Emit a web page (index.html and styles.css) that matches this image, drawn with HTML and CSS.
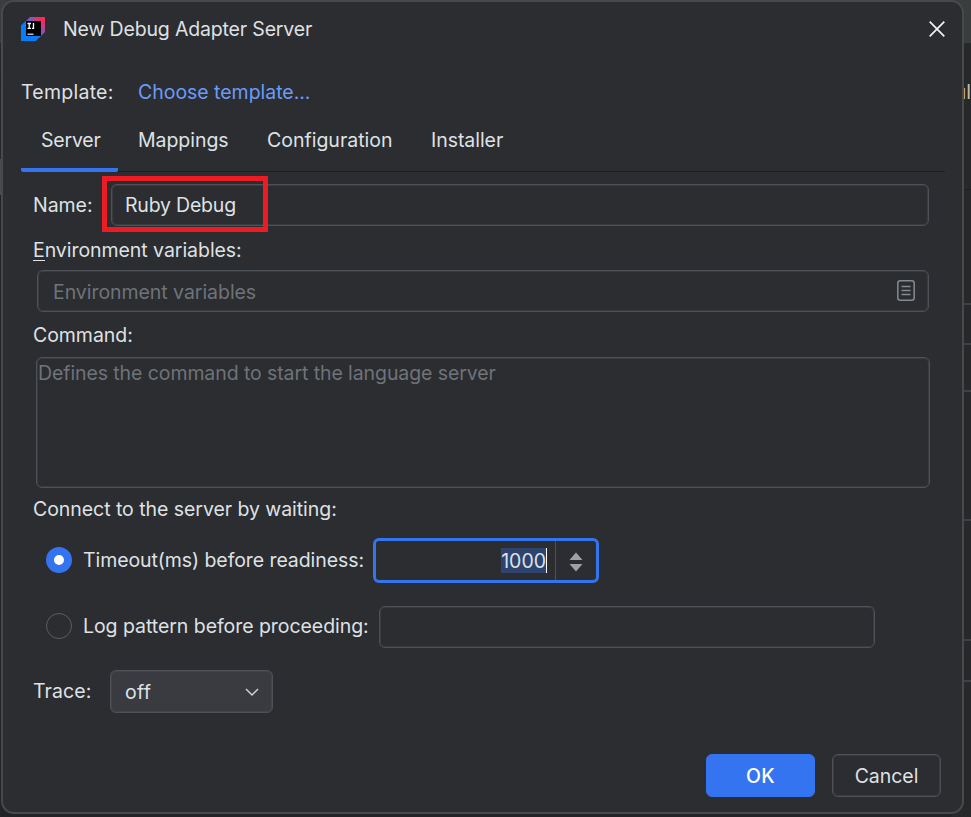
FILE: index.html
```html
<!DOCTYPE html>
<html lang="en">
<head>
<meta charset="utf-8">
<title>New Debug Adapter Server</title>
<link rel="stylesheet" href="styles.css">
</head>
<body>
<div class="backdrop">
  <div class="edge-left"><i class="el-top"></i><i class="el-gap"></i><i class="el-line"></i><i class="el-rest"></i><i class="el-thumb"></i></div>
  <div class="edge-right">
    <div class="er er-top"></div>
    <div class="er er-text"><span>ul</span></div>
    <div class="er er-a"></div>
    <div class="er er-b"></div>
    <div class="er er-c"></div>
    <div class="er er-d"></div>
    <div class="er er-e"></div>
    <div class="er er-f"></div>
    <div class="er er-g"></div>
  </div>
</div>
<main class="dialog">
  <header class="titlebar">
    <svg class="logo" width="24" height="24" viewBox="0 0 24 24">
      <defs>
        <linearGradient id="lg" x1="3" y1="9" x2="23" y2="3" gradientUnits="userSpaceOnUse">
          <stop offset="0" stop-color="#3b6fe8"/><stop offset=".45" stop-color="#8b52b8"/><stop offset=".8" stop-color="#fe2857"/>
        </linearGradient>
        <linearGradient id="lr" x1="22" y1="4" x2="18" y2="20" gradientUnits="userSpaceOnUse">
          <stop offset="0" stop-color="#fe2857"/><stop offset="1" stop-color="#4a6ce0"/>
        </linearGradient>
      </defs>
      <path d="M0 9 9 0h15v4H4v6z" fill="url(#lg)"/>
      <path d="M19 3h5v12l-6 6z" fill="url(#lr)"/>
      <path d="M0 8.500 5 4v15h14.500L15 24H0z" fill="#087cfa"/>
      <path d="M5 4h15v15H5z" fill="#000"/>
      <path d="M6.500 6.500h3.500M6.500 11.300h3.500M8.200 6.500v4.800M11 11.300h1.500V6" fill="none" stroke="#fff" stroke-width="1.300"/>
      <path d="M6.500 17.200h6" stroke="#ddd" stroke-width="1.300"/>
    </svg>
    <span class="title"><span class="t-title">New Debug Adapter Server</span></span>
    <svg class="close" width="16" height="16" viewBox="0 0 16 16"><path d="M.7.700l14.600 14.600M15.300.700.7 15.300" stroke="#f2f2f2" stroke-width="1.700"/></svg>
  </header>
  <div class="template"><span class="t-template">Template:</span><a class="t-choose">Choose template...</a></div>
  <nav class="tabs">
    <div class="tab tab-server active"><span>Server</span></div>
    <div class="tab tab-mappings"><span>Mappings</span></div>
    <div class="tab tab-config"><span>Configuration</span></div>
    <div class="tab tab-installer"><span>Installer</span></div>
  </nav>
  <section class="form">
    <div class="row name-row">
      <label class="t-name">Name:</label>
      <div class="field name-field"><span class="t-ruby">Ruby Debug</span></div>
      <div class="highlight"></div>
    </div>
    <div class="label env-label"><span class="t-env"><span class="mn">E</span>nvironment variables:</span></div>
    <div class="field env-field"><span class="t-envph">Environment variables</span>
      <svg width="18" height="21" viewBox="0 0 18 21" fill="none" stroke="#868a91"><rect x=".8" y=".8" width="16.400" height="19.400" rx="2.500" stroke-width="1.500"/><path d="M4.500 6.500h9M4.500 10.500h9M4.500 14.500h9" stroke-width="1.300"/></svg>
    </div>
    <div class="label cmd-label"><span class="t-cmd">Command:</span></div>
    <div class="field cmd-field"><span class="t-cmdph">Defines the command to start the language server</span></div>
    <div class="label connect-label"><span class="t-connect">Connect to the server by waiting:</span></div>
    <div class="row timeout-row">
      <i class="radio on"></i><label class="t-timeout">Timeout(ms) before readiness:</label>
      <div class="spinner"><span class="value"><span class="sel">1000</span></span>
        <span class="arrows"><svg width="14" height="20" viewBox="0 0 14 20" fill="#9da0a8"><path d="M7 .500 13.500 8H.5zM.5 12h13L7 19.500z"/></svg></span>
      </div>
    </div>
    <div class="row log-row">
      <i class="radio"></i><label class="t-log">Log pattern before proceeding:</label>
      <div class="field log-field"></div>
    </div>
    <div class="row trace-row">
      <label class="t-trace">Trace:</label>
      <div class="field combo"><span class="t-off">off</span>
        <svg width="14" height="9" viewBox="0 0 14 9" fill="none" stroke="#ced0d6" stroke-width="1.500"><path d="M1 1l6 6 6-6"/></svg>
      </div>
    </div>
  </section>
  <footer class="buttons">
    <div class="btn primary"><span class="t-ok">OK</span></div>
    <div class="btn"><span class="t-cancel">Cancel</span></div>
  </footer>
</main>
</body>
</html>
```
FILE: styles.css
```css
* { box-sizing: border-box; }
body {
  margin: 0;
  width: 971px;
  height: 817px;
  overflow: hidden;
  position: relative;
  background: #222326;
  color: #dfe1e5;
  font: 19.5px/24px Inter, sans-serif;
  letter-spacing: -.05px;
  white-space: nowrap;
}
.backdrop { position: absolute; inset: 0; display: flex; justify-content: space-between; }
.edge-left { width: 14px; display: flex; flex-direction: column; }
.edge-left i { display: block; background: #27282b; }
.edge-left .el-top { height: 43px; background: #3a3d3e; }
.edge-left .el-gap { height: 36px; }
.edge-left .el-line { height: 2px; background: #1e1f22; }
.edge-left .el-rest { height: 78px; }
.edge-left .el-thumb { height: 36px; background: #4a4b4e; }
.edge-right { width: 20px; }
.er { background: #27282a; border-bottom: 2px solid #404144; }
.er-top { height: 43px; background: #3a3d3e; border: 0; }
.er-text { height: 147px; border-bottom: 1px solid #1e1f22; padding-top: 37px; text-align: right; color: #c9bfa0; }
.er-a { height: 115px; }
.er-b { height: 40px; }
.er-c { height: 47px; }
.er-d { height: 129px; }
.er-e { height: 120px; }
.er-f { height: 41px; }
.er-g { height: 135px; border: 0; }

.dialog {
  position: relative;
  width: 963px;
  height: 814px;
  margin-left: 1px;
  border: 2px solid #48494c;
  border-radius: 13px;
  background: #2b2d30;
}
.titlebar { display: flex; align-items: center; height: 54px; padding: 0 17px 0 18px; }
.title { flex: 1; margin-left: 18px; letter-spacing: -.16px; }
.close { margin-left: auto; }
.template { display: flex; align-items: center; height: 72px; padding-left: 18px; }
.template a { color: #6b9bfa; letter-spacing: -.03px; }
.t-template { width: 117px; letter-spacing: .25px; }
.tabs { display: flex; height: 44px; margin: 0 17px 0 18px; border-bottom: 1px solid #1e1f22; }
.tab { height: 44px; padding: 0 20px; line-height: 24px; }
.active { background: linear-gradient(#3574f0, #3574f0) bottom / 100% 4px no-repeat; border-radius: 2px; }
.tab-server { width: 97px; letter-spacing: -.2px; }
.tab-mappings { width: 129px; }
.tab-config { width: 164px; letter-spacing: 0; }

.form { display: flex; flex-direction: column; padding-left: 30px; }
.row { display: flex; align-items: center; }
.field { border: 1px solid #4e5157; box-shadow: inset 0 0 0 1px #393b3f; border-radius: 6px; height: 42px; display: flex; align-items: center; }
.name-row { position: relative; height: 42px; margin-top: 12px; }
.t-name { width: 78px; }
.name-field { width: 818px; padding-left: 13px; letter-spacing: -.2px; }
.highlight { position: absolute; left: 69px; top: -8px; width: 166px; height: 56px; border: 5px solid #ed1c24; }
.label { height: 24px; }
.env-label { margin-top: 12px; }
.mn { box-shadow: 0 1px #dfe1e5; display: inline-block; height: 22px; }
.env-field { width: 892px; margin: 8px 0 0 4px; padding: 1px 13px 0 15px; justify-content: space-between; color: #6f737a; }
.env-field svg { margin-top: -2px; }
.cmd-label { margin-top: 11px; }
.cmd-field { width: 894px; height: 131px; margin: 10px 0 0 3px; align-items: flex-start; padding: 3px 0 0 1px; color: #6f737a; letter-spacing: -.09px; }
.connect-label { margin-top: 9px; }
.timeout-row { height: 46px; margin-top: 17px; padding-left: 13px; }
.timeout-row .radio, .log-row .radio, .t-timeout, .t-log, .t-trace { position: relative; top: -1px; }
.radio { width: 26px; height: 26px; border-radius: 50%; border: 1.5px solid #5a5d63; margin-right: 11px; }
.on { border: 8.500px solid #3574f0; background: #fff; }
.t-timeout { width: 290px; letter-spacing: -.08px; }
.spinner { display: flex; width: 226px; height: 45px; border: 3px solid #3574f0; border-radius: 6px; margin-top: -1px; }
.value { flex: 1; display: flex; justify-content: flex-end; align-items: center; padding-right: 8px; }
.sel { height: 25px; line-height: 26px; background: #2e436e; border-right: 1px solid #fff; letter-spacing: 0; }
.arrows { width: 41px; border-left: 1px solid #4e5157; display: flex; justify-content: center; align-items: center; padding: 2px 1px 0 0; }
.log-row { height: 42px; margin-top: 22px; padding-left: 13px; }
.t-log { width: 296px; }
.log-field { width: 496px; }
.trace-row { height: 43px; margin-top: 22px; }
.t-trace { width: 77px; letter-spacing: .1px; }
.combo { width: 163px; height: 43px; background: #393b40; box-shadow: inset 0 0 0 1px #424449; letter-spacing: .3px; padding: 1px 13px 0 14px; justify-content: space-between; }
.buttons { display: flex; justify-content: flex-end; gap: 17px; margin-top: 41px; padding-right: 21px; }
.btn { width: 109px; height: 43px; border: 1px solid #4e5157; box-shadow: inset 0 0 0 1px #393b3f; border-radius: 6px; display: flex; align-items: center; justify-content: center; }
.primary { background: #3574f0; border-color: #3574f0; box-shadow: none; color: #fff; font-weight: 500; letter-spacing: .3px; }
```
